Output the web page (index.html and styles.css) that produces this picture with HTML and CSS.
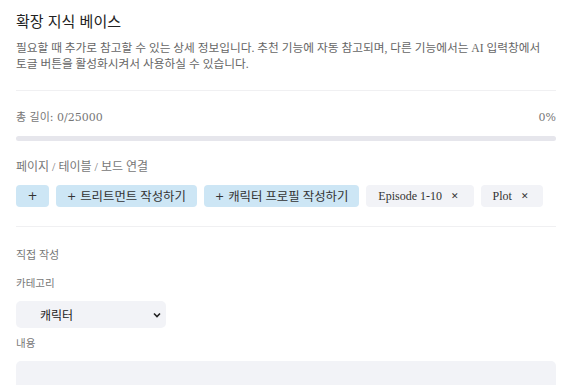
FILE: index.html
```html
<!DOCTYPE html>
<html lang="ko">
<head>
<meta charset="utf-8">
<link rel="stylesheet" href="styles.css">
</head>
<body>
<div class="panel">
  <h2 class="title">확장 지식 베이스</h2>
  <p class="desc">필요할 때 추가로 참고할 수 있는 상세 정보입니다. 추천 기능에 자동 참고되며, 다른 기능에서는 AI 입력창에서 토글 버튼을 활성화시켜서 사용하실 수 있습니다.</p>
  <hr class="divider">
  <div class="length-row"><span>총 길이: 0/25000</span><span>0%</span></div>
  <div class="progress"><div class="progress-fill" style="width:0%"></div></div>
  <div class="label link-label">페이지 / 테이블 / 보드 연결</div>
  <div class="chips">
    <button class="chip chip-blue chip-plus">+</button>
    <button class="chip chip-blue"><span class="plus">+</span>트리트먼트 작성하기</button>
    <button class="chip chip-blue"><span class="plus">+</span>캐릭터 프로필 작성하기</button>
    <span class="chip chip-gray">Episode 1-10 <span class="x">✕</span></span>
    <span class="chip chip-gray">Plot <span class="x">✕</span></span>
  </div>
  <hr class="divider divider2">
  <div class="label section">직접 작성</div>
  <div class="label small">카테고리</div>
  <div class="select">
    <span class="select-val">캐릭터</span>
    <svg class="chev" width="8" height="6" viewBox="0 0 8 6"><path d="M1 1.5 L4 4.5 L7 1.5" fill="none" stroke="#222" stroke-width="1.6"/></svg>
  </div>
  <div class="label small content-label">내용</div>
  <div class="textarea"></div>
</div>
</body>
</html>
```
FILE: styles.css
```css
* { box-sizing: border-box; }
body {
  margin: 0;
  background: #fff;
  font-family: "Liberation Serif", "Noto Sans CJK KR", serif;
  color: #333;
}
.panel {
  padding: 10px 14px 0 16px;
}
.title {
  margin: 0;
  font-family: "Noto Sans CJK KR", sans-serif;
  font-size: 15px;
  font-weight: 400;
  line-height: 22px;
  color: #222;
}
.desc {
  margin: 9px 0 0;
  font-size: 11.7px;
  line-height: 16px;
  color: #666;
  word-break: keep-all;
}
.divider {
  border: 0;
  border-top: 1px solid #f0f0f2;
  margin: 17px 0 0;
}
.length-row {
  display: flex;
  justify-content: space-between;
  margin-top: 19px;
  font-family: "DejaVu Serif", "Noto Sans CJK KR", serif;
  font-size: 11px;
  line-height: 16px;
  color: #777;
}
.progress {
  margin-top: 10px;
  height: 5px;
  border-radius: 3px;
  background: #e6e6ec;
}
.progress-fill { height: 100%; background: #4aa3df; border-radius: 3px; }
.label {
  font-size: 11px;
  line-height: 16px;
  color: #777;
}
.link-label { margin-top: 18px; font-size: 12px; }
.chips {
  display: flex;
  gap: 7px;
  margin-top: 10px;
}
.chip {
  height: 22px;
  border: 0;
  border-radius: 4px;
  padding: 0 11px;
  font-family: "Liberation Serif", "Noto Sans CJK KR", serif;
  font-size: 12.4px;
  color: #333;
  display: inline-flex;
  align-items: center;
  white-space: nowrap;
}
.plus { font-family: "DejaVu Sans", sans-serif; font-size: 11px; margin-right: 4px; }
.chip-blue { background: #cde6f5; }
.chip-plus { width: 33px; justify-content: center; padding: 0; font-family: "DejaVu Sans", sans-serif; font-size: 12px; }
.chip-gray { background: #f2f3f7; padding: 0 15px 0 12px; font-size: 12px; }
.x { margin-left: 9px; font-size: 9px; font-family: "DejaVu Sans", sans-serif; }
.divider2 { margin-top: 19px; }
.section { margin-top: 20px; }
.small { margin-top: 13px; font-size: 10.5px; }
.select {
  margin-top: 9px;
  width: 150px;
  height: 27px;
  border-radius: 5px;
  background: #f2f3f7;
  display: flex;
  align-items: center;
  justify-content: space-between;
  padding: 0 5px 0 24px;
}
.select-val {
  font-family: "Noto Sans CJK KR", sans-serif;
  font-size: 12px;
  color: #222;
}
.content-label { margin-top: 8px; }
.textarea {
  margin-top: 9px;
  height: 60px;
  border-radius: 5px;
  background: #f2f3f7;
}
```
